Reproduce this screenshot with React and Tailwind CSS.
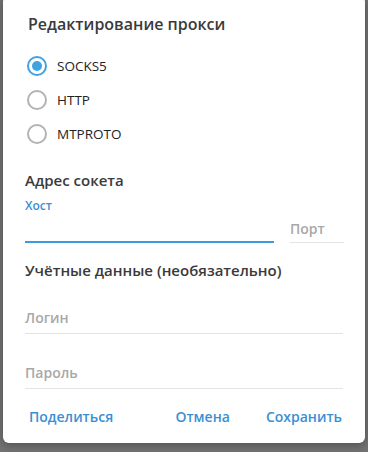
export default function App() {
  const font = { fontFamily: '"Open Sans", "Noto Sans", sans-serif' };
  const Radio = ({ checked, label }) => (
    <div className="flex h-[34px] items-center">
      <div className={`ml-[24px] flex h-[20px] w-[20px] items-center justify-center rounded-full border-2 ${checked ? 'border-[#40a2e3]' : 'border-[#b3b3b3]'}`}>
        {checked && <div className="h-[10px] w-[10px] rounded-full bg-[#40a2e3]" />}
      </div>
      <span className="ml-[10px] text-[13.5px] text-[#222]">{label}</span>
    </div>
  );
  return (
    <div className="h-[452px] w-[368px] overflow-hidden bg-[#727272]" style={font}>
      <div className="ml-[3px] mt-[-4px] flex h-[447px] w-[362px] flex-col rounded-[6px] bg-white pt-[4px] shadow-[0_2px_8px_rgba(0,0,0,0.3)]">
        <div className="flex h-[46px] items-center pl-[25px] pt-[1px] text-[16px] font-semibold text-[#3a3a3a]">
          Редактирование прокси
        </div>
        <div className="mt-[3px] flex flex-col">
          <Radio checked label="SOCKS5" />
          <Radio label="HTTP" />
          <Radio label="MTPROTO" />
        </div>
        <div className="mt-[17px] flex h-[24px] items-center pl-[22px] text-[15px] font-semibold text-[#3a3a3a]">
          Адрес сокета
        </div>
        <div className="mt-[6px] flex h-[16px] items-center pl-[22px] text-[12px] font-semibold text-[#3a8fd6]">
          Хост
        </div>
        <div className="flex h-[29px] pl-[22px]">
          <div className="flex h-full w-[249px] border-b-2 border-[#3a9de0]" />
          <div className="ml-[16px] flex h-full w-[54px] items-center border-b border-[#e4e4e4] pt-[1px] text-[14px] font-semibold text-[#a8a8a8]">
            Порт
          </div>
        </div>
        <div className="mt-[15px] flex h-[24px] items-center pl-[22px] text-[15px] font-semibold text-[#3a3a3a]">
          Учётные данные (необязательно)
        </div>
        <div className="mx-[22px] mt-[24px] flex h-[28px] items-center border-b border-[#e4e4e4] pb-[4px] text-[14px] font-semibold text-[#a8a8a8]">
          Логин
        </div>
        <div className="mx-[22px] mt-[27px] flex h-[28px] items-center border-b border-[#e4e4e4] pb-[4px] text-[14px] font-semibold text-[#a8a8a8]">
          Пароль
        </div>
        <div className="mt-[15px] flex h-[24px] items-center text-[14px] font-semibold text-[#3a8fd6]">
          <span className="ml-[26px]">Поделиться</span>
          <span className="ml-auto">Отмена</span>
          <span className="ml-[36px] mr-[23px]">Сохранить</span>
        </div>
      </div>
    </div>
  );
}
